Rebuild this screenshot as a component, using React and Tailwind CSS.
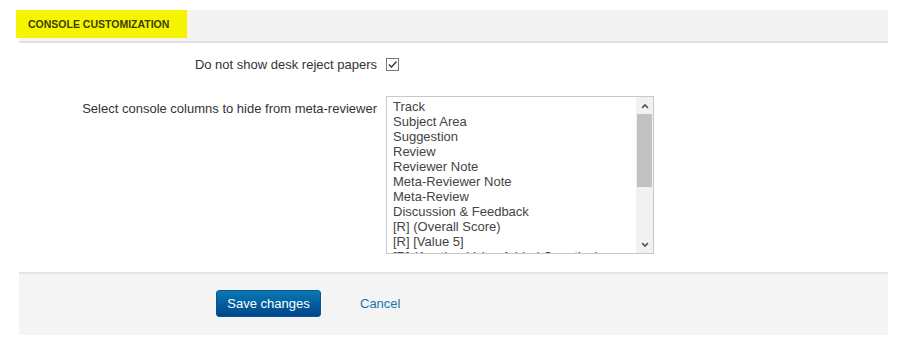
import React from "react";

const items = [
  "Track",
  "Subject Area",
  "Suggestion",
  "Review",
  "Reviewer Note",
  "Meta-Reviewer Note",
  "Meta-Review",
  "Discussion & Feedback",
  "[R] (Overall Score)",
  "[R] [Value 5]",
  "[R] (Another Value Added Question)",
];

export default function App() {
  return (
    <div className="w-[908px] h-[350px] bg-white font-['Liberation_Sans',Arial,sans-serif] text-[13px] text-[#333] pt-[10px]">
      <div className="ml-[19px] w-[869px]">
        {/* header */}
        <div className="h-[33px] bg-[#f3f3f3] border-b-2 border-[#e3e3e3] mt-px">
          <div className="-ml-[3px] -mt-px w-[171px] h-[28px] bg-[#f5f500] flex items-center pl-[12px] pt-px">
            <span className="text-[10.5px] font-bold text-[#3d3d00]">CONSOLE CUSTOMIZATION</span>
          </div>
        </div>

        {/* row 1 */}
        <div className="flex items-center mt-[14px] h-[15px]">
          <div className="w-[358px] text-right">Do not show desk reject papers</div>
          <div className="ml-[9px] w-[13px] h-[13px] border border-[#777] bg-white flex items-center justify-center">
            <svg width="11" height="11" viewBox="0 0 11 11">
              <path d="M2 5.5 L4.5 8 L9.5 2.5" fill="none" stroke="#333" strokeWidth="1.3" />
            </svg>
          </div>
        </div>

        {/* row 2 */}
        <div className="flex items-start mt-[24px]">
          <div className="w-[358px] text-right pt-[3px]">Select console columns to hide from meta-reviewer</div>
          <div className="ml-[9px] w-[268px] h-[158px] border border-[#c8c8c8] bg-white flex overflow-hidden">
            <div className="flex-1 overflow-hidden pl-[6px] pt-[2px] text-[#444] leading-[15px]">
              {items.map((t) => (
                <div key={t} className="whitespace-nowrap">{t}</div>
              ))}
            </div>
            <div className="w-[17px] h-full bg-[#f1f1f1] flex flex-col">
              <div className="h-[17px] flex items-center justify-center">
                <svg width="8" height="6" viewBox="0 0 8 6">
                  <path d="M1 5 L4 2 L7 5" fill="none" stroke="#505050" strokeWidth="1.6" />
                </svg>
              </div>
              <div className="h-[73px] mx-[1px] bg-[#c1c1c1]" />
              <div className="flex-1" />
              <div className="h-[17px] flex items-center justify-center">
                <svg width="8" height="6" viewBox="0 0 8 6">
                  <path d="M1 1 L4 4 L7 1" fill="none" stroke="#505050" strokeWidth="1.6" />
                </svg>
              </div>
            </div>
          </div>
        </div>

        {/* footer */}
        <div className="mt-[18px] h-[63px] bg-[#f4f4f4] border-t-2 border-[#e3e3e3] flex items-start pt-[16px]">
          <button className="ml-[197px] w-[105px] h-[27px] rounded-[3px] bg-gradient-to-b from-[#0b78b5] to-[#00468a] border border-[#0a5590] text-white text-[13px] flex items-center justify-center">
            Save changes
          </button>
          <a className="ml-[39px] mt-[4px] text-[#1474b0]">Cancel</a>
        </div>
      </div>
    </div>
  );
}
